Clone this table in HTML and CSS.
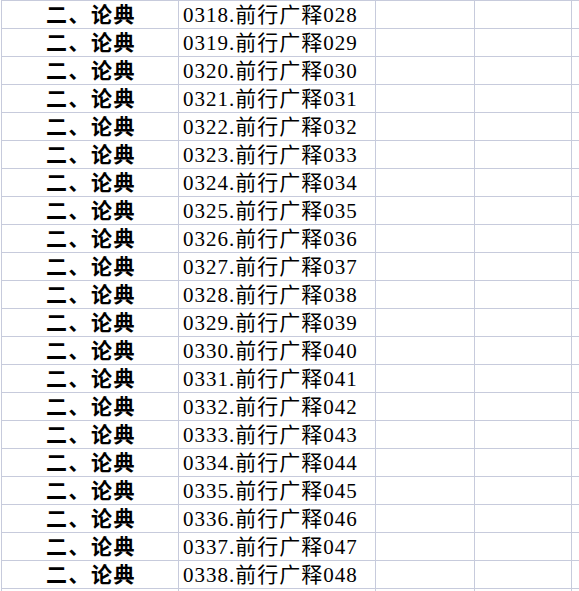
FILE: index.html
```html
<!DOCTYPE html>
<html lang="zh-CN">
<head>
<meta charset="utf-8">
<title>Sheet</title>
<link rel="stylesheet" href="styles.css">
</head>
<body>
<div class="sheet">
  <div class="row"><div class="c c1">二、论典</div><div class="c c2">0318.前行广释028</div><div class="c c3"></div><div class="c c4"></div><div class="c c5"></div></div>
  <div class="row"><div class="c c1">二、论典</div><div class="c c2">0319.前行广释029</div><div class="c c3"></div><div class="c c4"></div><div class="c c5"></div></div>
  <div class="row"><div class="c c1">二、论典</div><div class="c c2">0320.前行广释030</div><div class="c c3"></div><div class="c c4"></div><div class="c c5"></div></div>
  <div class="row"><div class="c c1">二、论典</div><div class="c c2">0321.前行广释031</div><div class="c c3"></div><div class="c c4"></div><div class="c c5"></div></div>
  <div class="row"><div class="c c1">二、论典</div><div class="c c2">0322.前行广释032</div><div class="c c3"></div><div class="c c4"></div><div class="c c5"></div></div>
  <div class="row"><div class="c c1">二、论典</div><div class="c c2">0323.前行广释033</div><div class="c c3"></div><div class="c c4"></div><div class="c c5"></div></div>
  <div class="row"><div class="c c1">二、论典</div><div class="c c2">0324.前行广释034</div><div class="c c3"></div><div class="c c4"></div><div class="c c5"></div></div>
  <div class="row"><div class="c c1">二、论典</div><div class="c c2">0325.前行广释035</div><div class="c c3"></div><div class="c c4"></div><div class="c c5"></div></div>
  <div class="row"><div class="c c1">二、论典</div><div class="c c2">0326.前行广释036</div><div class="c c3"></div><div class="c c4"></div><div class="c c5"></div></div>
  <div class="row"><div class="c c1">二、论典</div><div class="c c2">0327.前行广释037</div><div class="c c3"></div><div class="c c4"></div><div class="c c5"></div></div>
  <div class="row"><div class="c c1">二、论典</div><div class="c c2">0328.前行广释038</div><div class="c c3"></div><div class="c c4"></div><div class="c c5"></div></div>
  <div class="row"><div class="c c1">二、论典</div><div class="c c2">0329.前行广释039</div><div class="c c3"></div><div class="c c4"></div><div class="c c5"></div></div>
  <div class="row"><div class="c c1">二、论典</div><div class="c c2">0330.前行广释040</div><div class="c c3"></div><div class="c c4"></div><div class="c c5"></div></div>
  <div class="row"><div class="c c1">二、论典</div><div class="c c2">0331.前行广释041</div><div class="c c3"></div><div class="c c4"></div><div class="c c5"></div></div>
  <div class="row"><div class="c c1">二、论典</div><div class="c c2">0332.前行广释042</div><div class="c c3"></div><div class="c c4"></div><div class="c c5"></div></div>
  <div class="row"><div class="c c1">二、论典</div><div class="c c2">0333.前行广释043</div><div class="c c3"></div><div class="c c4"></div><div class="c c5"></div></div>
  <div class="row"><div class="c c1">二、论典</div><div class="c c2">0334.前行广释044</div><div class="c c3"></div><div class="c c4"></div><div class="c c5"></div></div>
  <div class="row"><div class="c c1">二、论典</div><div class="c c2">0335.前行广释045</div><div class="c c3"></div><div class="c c4"></div><div class="c c5"></div></div>
  <div class="row"><div class="c c1">二、论典</div><div class="c c2">0336.前行广释046</div><div class="c c3"></div><div class="c c4"></div><div class="c c5"></div></div>
  <div class="row"><div class="c c1">二、论典</div><div class="c c2">0337.前行广释047</div><div class="c c3"></div><div class="c c4"></div><div class="c c5"></div></div>
  <div class="row"><div class="c c1">二、论典</div><div class="c c2">0338.前行广释048</div><div class="c c3"></div><div class="c c4"></div><div class="c c5"></div></div>
  <div class="row"><div class="c c1"></div><div class="c c2"></div><div class="c c3"></div><div class="c c4"></div><div class="c c5"></div></div>
</div>
</body>
</html>
```

FILE: styles.css
```css
html, body {
  margin: 0;
  padding: 0;
  background: #ffffff;
  overflow: hidden;
  width: 579px;
  height: 591px;
}

.sheet {
  width: 578px;
  margin-left: 1px;
  border-top: 1px solid #c7cbdc;
  border-left: 1px solid #c7cbdc;
  box-sizing: border-box;
  display: flex;
  flex-direction: column;
  font-family: "Liberation Serif", "Noto Sans CJK SC", serif;
  color: #000000;
}

.row {
  display: grid;
  grid-template-columns: 177px 197px 99px 97px 7px;
  height: 28px;
  box-sizing: border-box;
  border-bottom: 1px solid #c7cbdc;
}

.c {
  border-right: 1px solid #c7cbdc;
  height: 27px;
  line-height: 28px;
  white-space: nowrap;
  overflow: hidden;
}

.c5 {
  border-right: none;
}

.c1 {
  text-align: center;
  font-size: 21px;
  font-weight: bold;
  letter-spacing: 1.5px;
  padding-left: 2px;
}

.c2 {
  padding-left: 4px;
  font-size: 21px;
  letter-spacing: 1px;
}
```
